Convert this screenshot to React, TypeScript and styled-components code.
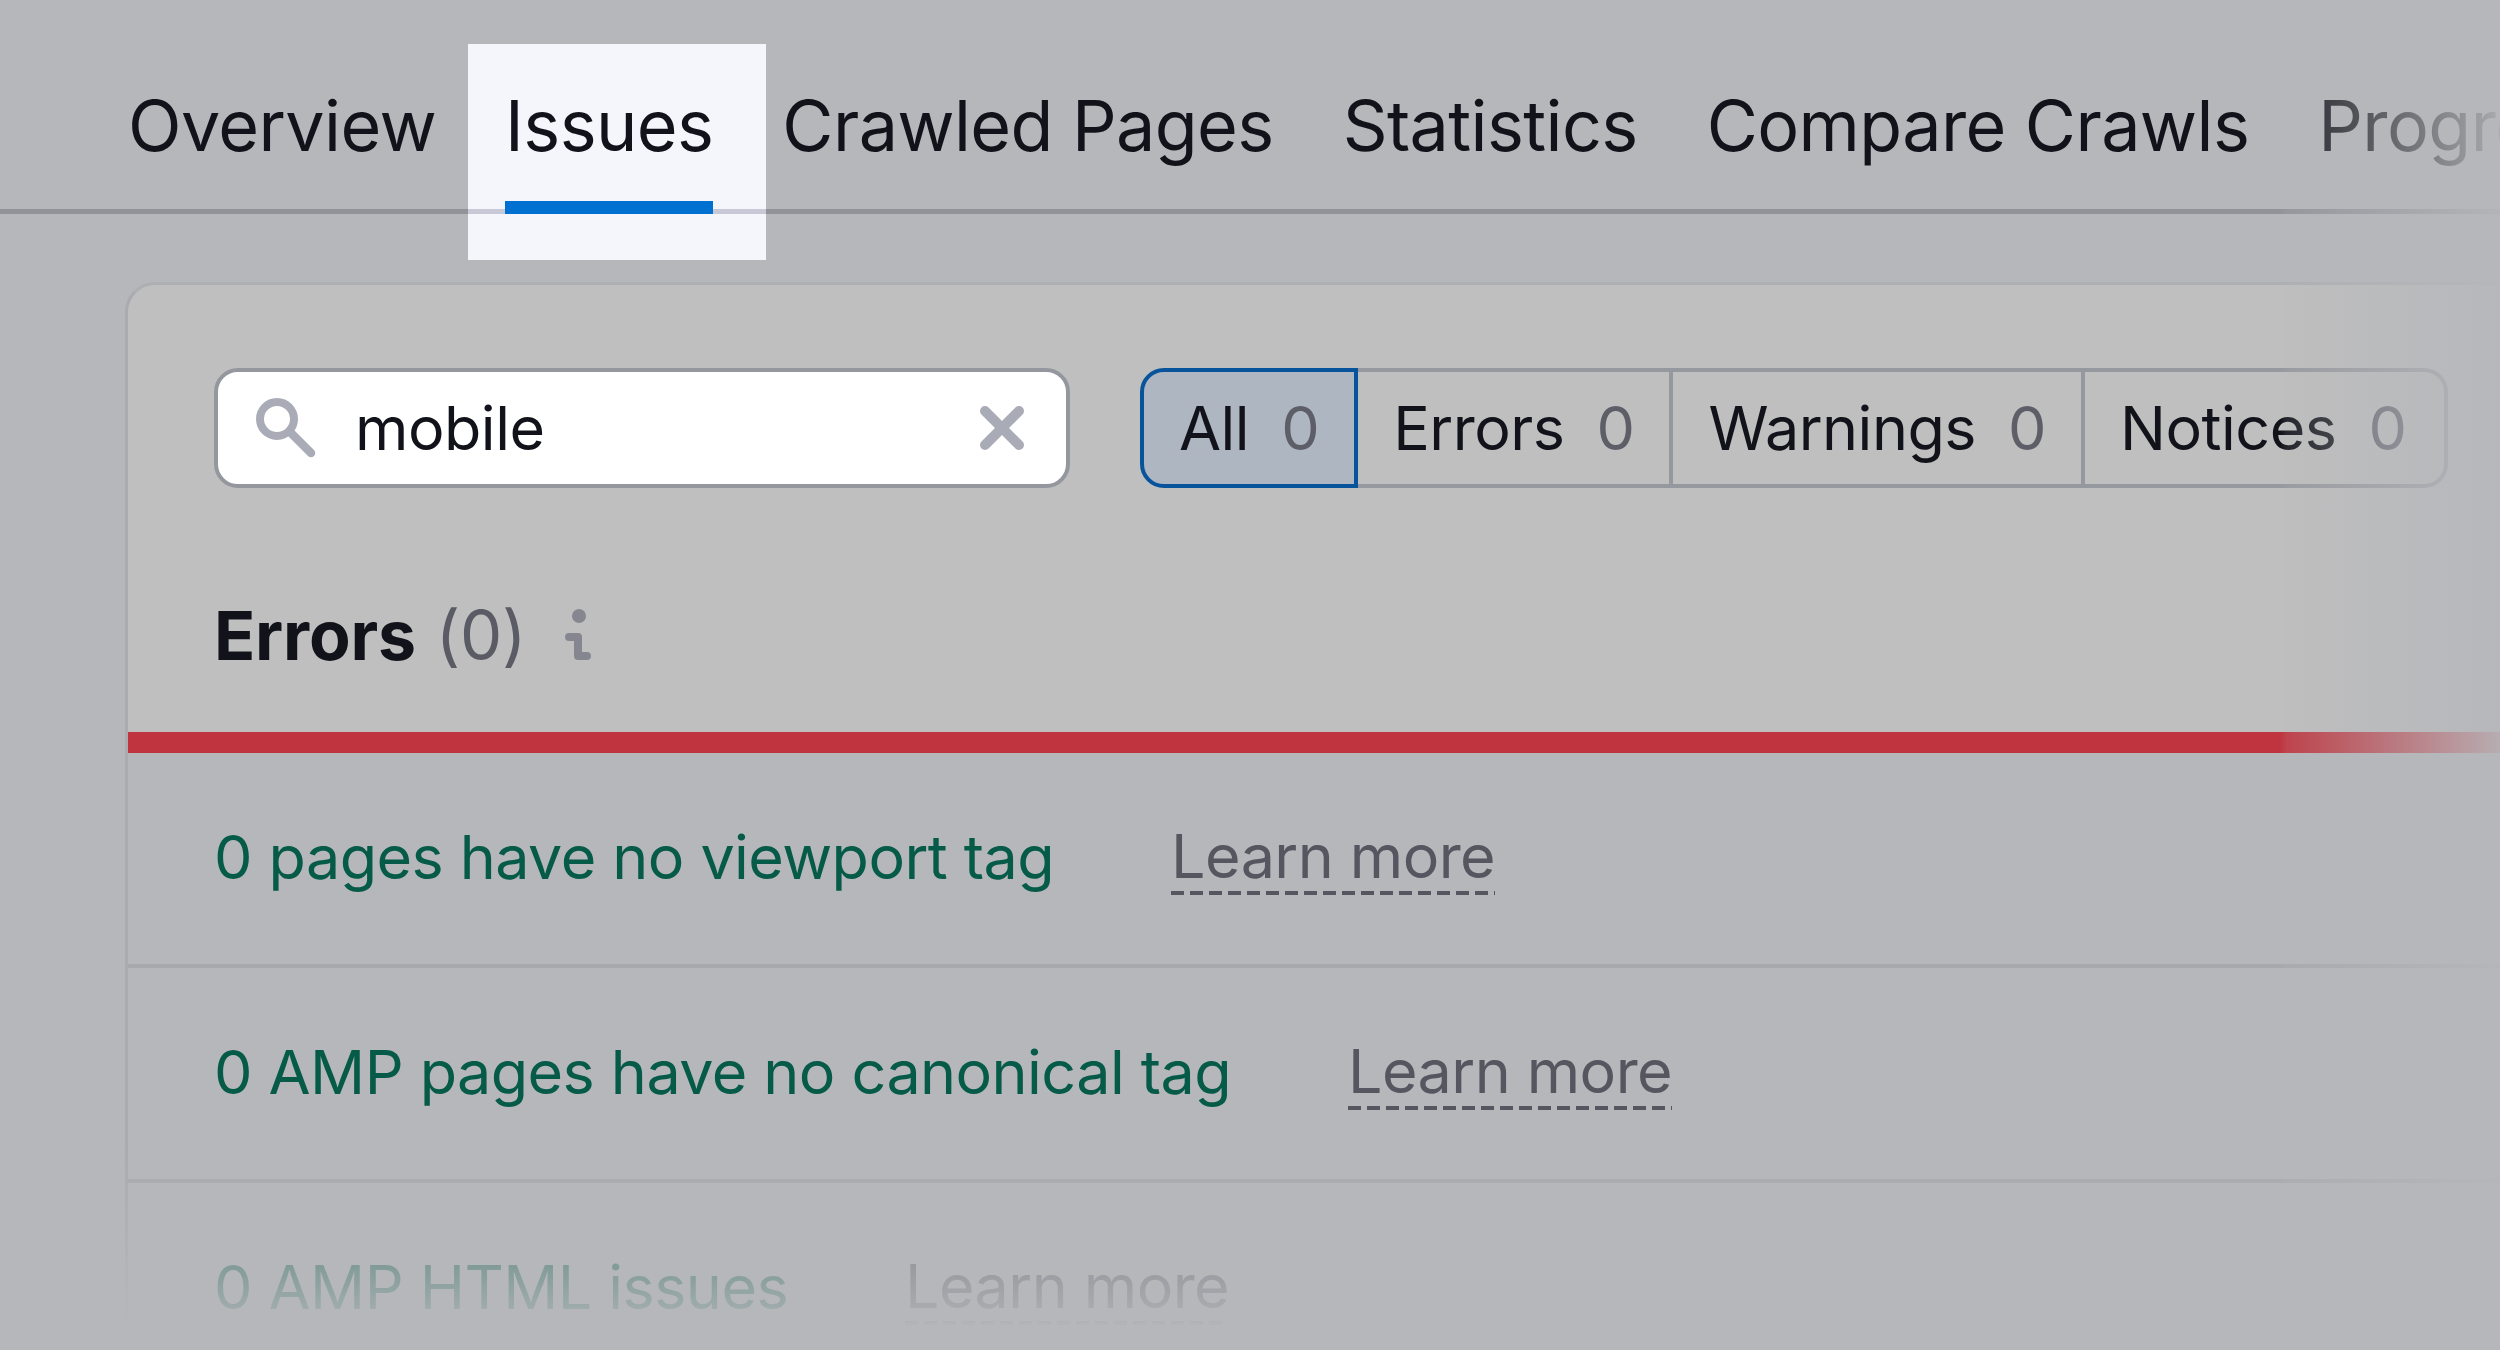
import React from "react";
import styled, { createGlobalStyle } from "styled-components";

const Global = createGlobalStyle`
  html, body { margin: 0; padding: 0; background: #b6b7bb; }
  body { font-family: Inter, "Liberation Sans", sans-serif; color: #12131a; }
`;

const Page = styled.div`
  position: relative;
  width: 2500px;
  height: 1350px;
  overflow: hidden;
  background: #b6b7bb;
`;

const TabBar = styled.nav`
  display: flex;
  gap: 69px;
  height: 209px;
  box-sizing: content-box;
  padding-left: 128px;
  border-bottom: 5px solid #929399;
`;

const Tab = styled.div<{ $active?: boolean }>`
  position: relative;
  flex: none;
  padding-top: 84px;
  font-size: 70px;
  line-height: 84px;
  letter-spacing: -0.6px;
  white-space: nowrap;
`;

const Spotlight = styled.span`
  position: absolute;
  z-index: 0;
  left: -37px;
  right: -53px;
  top: 44px;
  height: 216px;
  background: linear-gradient(#f4f6fb 0 165px, #c7cad6 165px 170px, #f4f6fb 170px);
`;

const TabLabel = styled.span`
  position: relative;
  z-index: 1;
`;

const TabUnderline = styled.span`
  position: absolute;
  z-index: 1;
  left: 0;
  right: 0;
  top: 201px;
  height: 13px;
  background: #0071d1;
`;

const Panel = styled.section`
  margin: 68px 0 0 125px;
  border-left: 3px solid #aaabaf;
  border-top: 3px solid #aeafb3;
  border-top-left-radius: 30px;
  background: linear-gradient(#bfbfbf 0 447px, #b6b7bb 447px);
`;

const PanelHead = styled.div`
  padding: 83px 0 0 86px;
  height: 364px;
  box-sizing: content-box;
`;

const Controls = styled.div`
  display: flex;
  gap: 70px;
`;

const Search = styled.div`
  flex: none;
  width: 856px;
  height: 120px;
  box-sizing: border-box;
  display: flex;
  align-items: center;
  gap: 39px;
  padding: 0 42px 0 38px;
  background: #fff;
  border: 4px solid #95979e;
  border-radius: 24px;
`;

const SearchValue = styled.span`
  flex: 1;
  font-size: 61px;
  line-height: 74px;
  letter-spacing: -0.5px;
`;

const Icon = styled.svg`
  display: block;
  flex: none;
`;

const Segments = styled.div`
  display: flex;
  height: 120px;
`;

const Segment = styled.div<{ $active?: boolean; $first?: boolean; $last?: boolean }>`
  flex: none;
  display: flex;
  align-items: center;
  gap: 32px;
  box-sizing: border-box;
  height: 120px;
  padding: 0 ${(p) => (p.$last ? "38px" : "35px")} 0 35px;
  font-size: 61px;
  line-height: 74px;
  letter-spacing: -0.5px;
  margin-left: ${(p) => (p.$first ? "0" : "-4px")};
  border: 4px solid ${(p) => (p.$active ? "#07539c" : "#96989f")};
  background: ${(p) => (p.$active ? "#adb6c1" : "transparent")};
  border-radius: ${(p) => (p.$first ? "24px 0 0 24px" : p.$last ? "0 24px 24px 0" : "0")};
  position: relative;
  z-index: ${(p) => (p.$active ? 1 : 0)};
`;

const Count = styled.span`
  color: #5d5e68;
`;

const Title = styled.h2`
  display: flex;
  align-items: center;
  margin: 105px 0 0;
  height: 84px;
  font-size: 68px;
  line-height: 84px;
  font-weight: 700;
  letter-spacing: -0.2px;
  color: #12131a;
`;

const TitleCount = styled.span`
  margin-left: 20px;
  font-size: 67px;
  font-weight: 400;
  color: #5a5b65;
`;

const InfoIcon = styled(Icon)`
  margin-left: 39px;
`;

const RedBar = styled.div`
  height: 21px;
  background: #bf343e;
`;

const Row = styled.div`
  display: flex;
  align-items: center;
  height: 215px;
  box-sizing: border-box;
  padding: 0 0 4px 86px;
  border-bottom: 4px solid #a8a9ad;
  font-size: 61px;
  line-height: 74px;
  letter-spacing: -0.55px;
  white-space: nowrap;
`;

const IssueLink = styled.span`
  color: #055a48;
`;

const Learn = styled.span`
  margin-left: 117px;
  padding-bottom: 2px;
  color: #55565f;
  background: repeating-linear-gradient(90deg, #55565f 0 13px, transparent 13px 19px) left bottom / 100% 4px no-repeat;
`;

const FadeRight = styled.div`
  position: absolute;
  z-index: 3;
  top: 0;
  bottom: 0;
  right: 0;
  width: 220px;
  background: linear-gradient(90deg, rgba(182,183,187,0) 0%, rgba(182,183,187,0.12) 3%, rgba(182,183,187,0.92) 100%);
`;

const FadeBottom = styled.div`
  position: absolute;
  z-index: 3;
  left: 0;
  right: 0;
  bottom: 0;
  height: 210px;
  background: linear-gradient(180deg, rgba(182,183,187,0) 0%, rgba(182,183,187,0.7) 59.5%, rgba(182,183,187,0.88) 81%, rgba(182,183,187,1) 90%);
`;

const tabs = ["Overview", "Issues", "Crawled Pages", "Statistics", "Compare Crawls", "Progress"];
const segments = [
  { label: "All", count: 0 },
  { label: "Errors", count: 0 },
  { label: "Warnings", count: 0 },
  { label: "Notices", count: 0 },
];
const issues = ["0 pages have no viewport tag", "0 AMP pages have no canonical tag", "0 AMP HTML issues"];

export default function App() {
  return (
    <Page>
      <Global />
      <TabBar>
        {tabs.map((t) => (
          <Tab key={t} $active={t === "Issues"}>
            {t === "Issues" && <Spotlight />}
            <TabLabel>{t}</TabLabel>
            {t === "Issues" && <TabUnderline />}
          </Tab>
        ))}
      </TabBar>
      <Panel>
        <PanelHead>
          <Controls>
            <Search>
              <Icon width="60" height="60" viewBox="0 0 60 60" fill="none" stroke="#a9abb6">
                <circle cx="21" cy="21" r="17" strokeWidth="8" />
                <line x1="34" y1="34" x2="55" y2="55" strokeWidth="8.5" strokeLinecap="round" />
              </Icon>
              <SearchValue>mobile</SearchValue>
              <Icon width="44" height="44" viewBox="0 0 44 44" fill="none" stroke="#a9abb6" strokeWidth="10" strokeLinecap="round">
                <line x1="5" y1="5" x2="39" y2="39" />
                <line x1="39" y1="5" x2="5" y2="39" />
              </Icon>
            </Search>
            <Segments>
              {segments.map((s, i) => (
                <Segment key={s.label} $active={i === 0} $first={i === 0} $last={i === segments.length - 1}>
                  <span>{s.label}</span>
                  <Count>{s.count}</Count>
                </Segment>
              ))}
            </Segments>
          </Controls>
          <Title>
            Errors
            <TitleCount>(0)</TitleCount>
            <InfoIcon width="26" height="52" viewBox="0 0 26 52" fill="none" stroke="#85868f">
              <circle cx="14" cy="7" r="7" fill="#85868f" stroke="none" />
              <path d="M4 28h9v19h9" strokeWidth="8" strokeLinecap="round" strokeLinejoin="round" />
            </InfoIcon>
          </Title>
        </PanelHead>
        <RedBar />
        {issues.map((t) => (
          <Row key={t}>
            <IssueLink>{t}</IssueLink>
            <Learn>Learn more</Learn>
          </Row>
        ))}
      </Panel>
      <FadeRight />
      <FadeBottom />
    </Page>
  );
}
